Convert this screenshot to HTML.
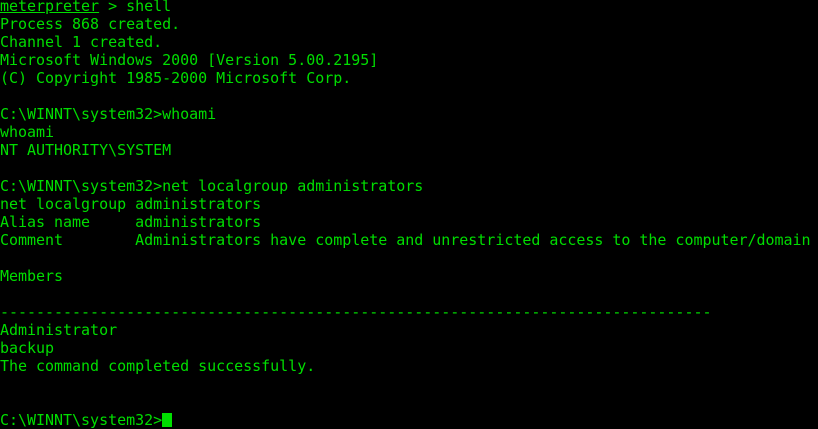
<!DOCTYPE html>
<html><head><style>
html,body{margin:0;padding:0;background:#000;width:818px;height:428px;overflow:hidden}
pre{margin:0;position:absolute;left:0;top:-3px;font-family:"DejaVu Sans Mono","Liberation Mono",monospace;font-size:15px;line-height:18px;letter-spacing:-0.025px;color:#00dd00;white-space:pre}
u{text-decoration:underline;text-underline-offset:1px}
.c{display:inline-block;width:10px;height:14px;background:#00e000;vertical-align:-2px}
</style></head><body><pre><u>meterpreter</u> &gt; shell
Process 868 created.
Channel 1 created.
Microsoft Windows 2000 [Version 5.00.2195]
(C) Copyright 1985-2000 Microsoft Corp.

C:\WINNT\system32&gt;whoami
whoami
NT AUTHORITY\SYSTEM

C:\WINNT\system32&gt;net localgroup administrators
net localgroup administrators
Alias name     administrators
Comment        Administrators have complete and unrestricted access to the computer/domain

Members

-------------------------------------------------------------------------------
Administrator
backup
The command completed successfully.


C:\WINNT\system32&gt;<span class="c"></span></pre></body></html>
